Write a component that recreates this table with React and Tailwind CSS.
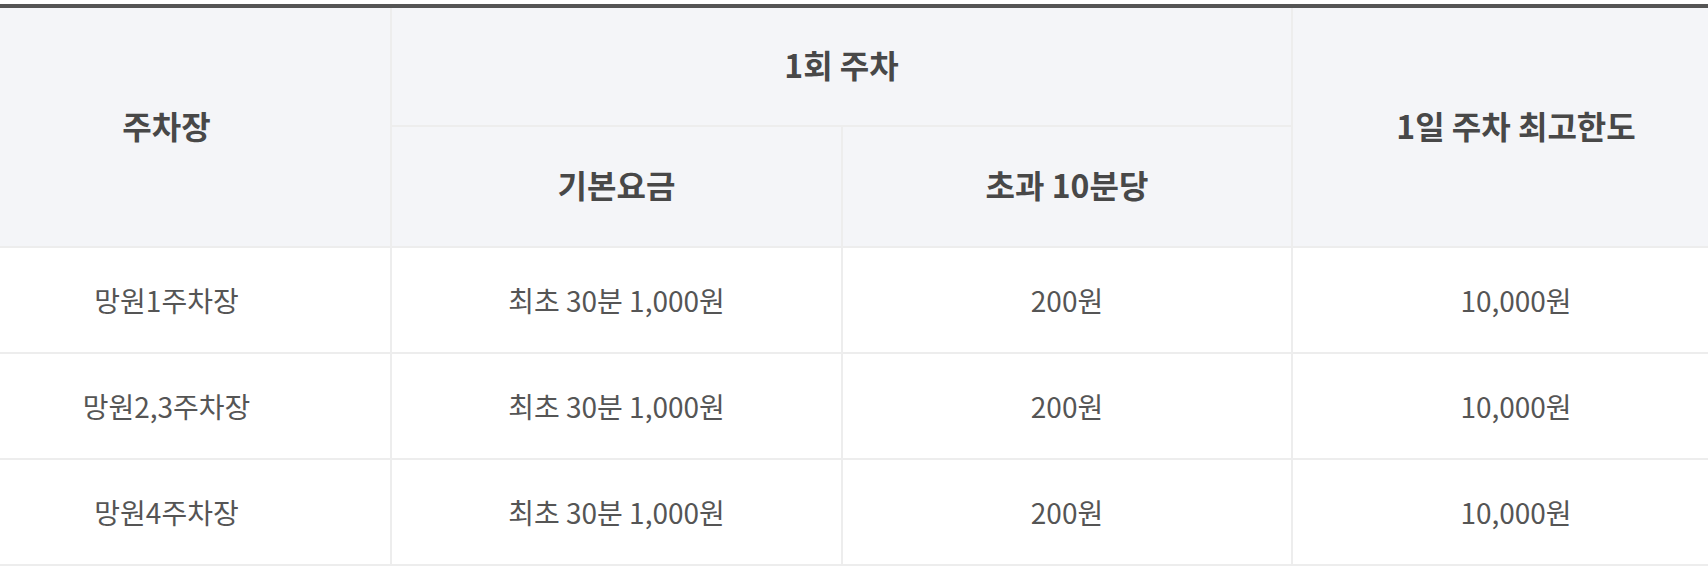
import React from "react";

const rows = [
  { name: "망원1주차장", base: "최초 30분 1,000원", extra: "200원", max: "10,000원" },
  { name: "망원2,3주차장", base: "최초 30분 1,000원", extra: "200원", max: "10,000원" },
  { name: "망원4주차장", base: "최초 30분 1,000원", extra: "200원", max: "10,000원" },
];

const App = () => {
  return (
    <div
      className="w-[1708px] h-[578px] bg-white pt-1 overflow-hidden"
      style={{ fontFamily: '"Noto Sans CJK KR", "Noto Sans", sans-serif' }}
    >
      {/* table is wider than the view, cropped on both sides */}
      <table className="w-[1796px] -ml-[57px] border-collapse border-t-4 border-t-[#555555] text-center">
        <colgroup>
          <col className="w-[448px]" />
          <col className="w-[451px]" />
          <col className="w-[450px]" />
          <col className="w-[447px]" />
        </colgroup>
        <thead className="bg-[#f4f5f8] text-[32px] font-bold text-[#484848]">
          <tr className="h-[120px]">
            <th rowSpan={2} className="border-r-2 border-[#ededed] pb-[5px]">
              주차장
            </th>
            <th colSpan={2} className="border-b-2 border-[#ededed] pb-[5px]">
              1회 주차
            </th>
            <th rowSpan={2} className="border-l-2 border-[#ededed] pb-[5px]">
              1일 주차 최고한도
            </th>
          </tr>
          <tr className="h-[121px]">
            <th className="border-r-2 border-[#ededed] pb-[5px]">기본요금</th>
            <th className="pb-[5px]">초과 10분당</th>
          </tr>
        </thead>
        <tbody className="text-[28px] text-[#555555]">
          {rows.map((r) => (
            <tr key={r.name} className="h-[106px] border-t-2 border-b-2 border-[#ededed]">
              <td className="border-r-2 border-[#ededed]">{r.name}</td>
              <td className="border-r-2 border-[#ededed]">{r.base}</td>
              <td className="border-r-2 border-[#ededed]">{r.extra}</td>
              <td>{r.max}</td>
            </tr>
          ))}
        </tbody>
      </table>
    </div>
  );
};

export default App;
